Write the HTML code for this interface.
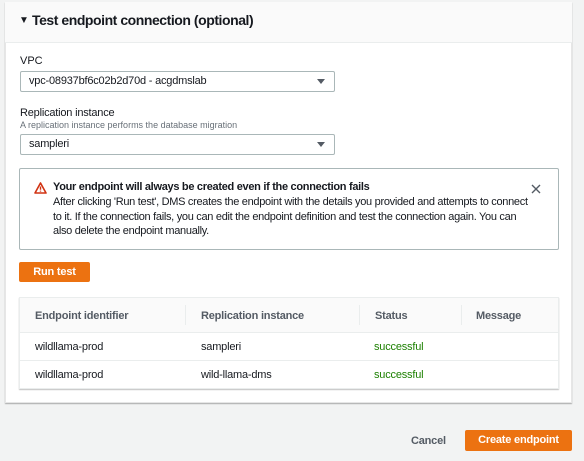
<!DOCTYPE html>
<html><head><style>
*{box-sizing:border-box;margin:0;padding:0}
body{width:584px;height:461px;background:#f2f3f3;font-family:"Liberation Sans",sans-serif;color:#16191f;position:relative;overflow:hidden;font-size:11px}
.a{position:absolute}
.panel{left:5px;top:2px;width:567px;height:401px;background:#fff;box-shadow:0 1px 1px rgba(0,0,0,.3);border:1px solid #e6e6e6}
.hdr{left:5px;top:2px;width:567px;height:41px;background:#fafafa;border-bottom:1px solid #eaeded}
.sel{border:1px solid #aab7b8;border-radius:2px;background:#fff;height:21px;width:315px;left:20px;padding:3px 8px;font-size:11px;letter-spacing:-0.2px}
.sel:after{content:"";position:absolute;right:9px;top:7px;border-left:4px solid transparent;border-right:4px solid transparent;border-top:5px solid #545b64}
.btn{background:#ec7211;color:#fff;font-weight:bold;border-radius:2px;text-align:center;font-size:11px;letter-spacing:-0.2px}
.t{letter-spacing:-0.2px}
</style></head><body>
<div class="a panel"></div>
<div class="a hdr"></div>
<div class="a" style="left:19px;top:15px;font-size:10px">▼</div>
<div class="a" style="left:32px;top:12px;font-size:14px;font-weight:bold;letter-spacing:-0.45px">Test endpoint connection (optional)</div>
<div class="a" style="left:20px;top:55px;font-size:11px">VPC</div>
<div class="a sel" style="top:71px">vpc-08937bf6c02b2d70d - acgdmslab</div>
<div class="a t" style="left:20px;top:107px;font-size:11px">Replication instance</div>
<div class="a" style="left:20px;top:120px;font-size:9px;color:#687078">A replication instance performs the database migration</div>
<div class="a sel" style="top:134px">sampleri</div>
<div class="a" style="left:19px;top:168px;width:540px;height:82px;border:1px solid #aab7b8;border-radius:2px"></div>
<svg class="a" style="left:34px;top:182px" width="13" height="12" viewBox="0 0 13 12"><path d="M6.5 1L12 11H1Z" fill="none" stroke="#d13212" stroke-width="1.6" stroke-linejoin="round"/><path d="M6.5 4.5v3.2M6.5 8.6v1" stroke="#d13212" stroke-width="1.4"/></svg>
<div class="a t" style="left:53px;top:181px;font-weight:bold;font-size:11px;letter-spacing:-0.3px">Your endpoint will always be created even if the connection fails</div>
<div class="a t" style="left:53px;top:195px;width:480px;font-size:11px;line-height:14.5px;letter-spacing:-0.3px">After clicking 'Run test', DMS creates the endpoint with the details you provided and attempts to connect to it. If the connection fails, you can edit the endpoint definition and test the connection again. You can also delete the endpoint manually.</div>
<svg class="a" style="left:531px;top:184px" width="10" height="10"><path d="M1 1L9 9M9 1L1 9" stroke="#545b64" stroke-width="1.4"/></svg>
<div class="a btn" style="left:19px;top:262px;width:71px;height:20px;line-height:20px">Run test</div>
<div class="a t" style="left:19px;top:297px;width:540px;height:92px;border:1px solid #eaeded;box-shadow:0 1px 1px rgba(0,0,0,.25);background:#fff">
<div class="a" style="left:0;top:0;width:538px;height:35px;background:#fafafa;border-bottom:1px solid #eaeded"></div>
<div class="a" style="left:165px;top:7px;height:20px;border-left:1px solid #eaeded"></div>
<div class="a" style="left:339px;top:7px;height:20px;border-left:1px solid #eaeded"></div>
<div class="a" style="left:441px;top:7px;height:20px;border-left:1px solid #eaeded"></div>
<div class="a" style="left:0;top:62px;width:538px;border-top:1px solid #eaeded"></div>
<div class="a" style="left:15px;top:12px;font-weight:bold;color:#545b64">Endpoint identifier</div>
<div class="a" style="left:181px;top:12px;font-weight:bold;color:#545b64">Replication instance</div>
<div class="a" style="left:355px;top:12px;font-weight:bold;color:#545b64">Status</div>
<div class="a" style="left:456px;top:12px;font-weight:bold;color:#545b64">Message</div>
<div class="a" style="left:15px;top:43px">wildllama-prod</div>
<div class="a" style="left:181px;top:43px">sampleri</div>
<div class="a" style="left:354px;top:43px;color:#1d8102">successful</div>
<div class="a" style="left:15px;top:71px">wildllama-prod</div>
<div class="a" style="left:181px;top:71px">wild-llama-dms</div>
<div class="a" style="left:354px;top:71px;color:#1d8102">successful</div>
</div>
<div class="a t" style="left:411px;top:435px;font-weight:bold;color:#545b64">Cancel</div>
<div class="a btn" style="left:465px;top:430px;width:107px;height:21px;line-height:21px">Create endpoint</div>
</body></html>
